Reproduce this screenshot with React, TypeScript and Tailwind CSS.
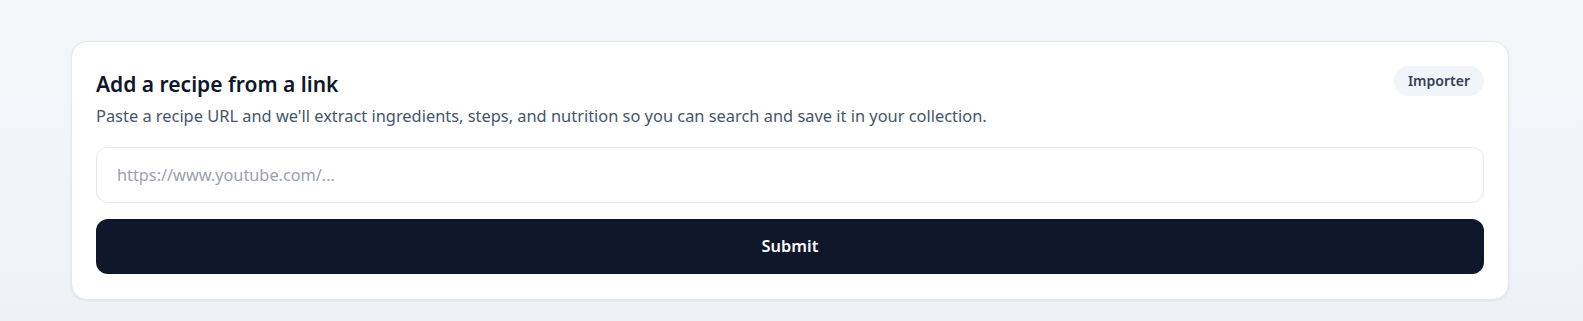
export default function App() {
  return (
    <div
      className="min-h-screen bg-gradient-to-b from-[#f5f7fa] to-[#eef2f7] pl-[71px] pr-[74px] pt-[41px] pb-6"
      style={{ fontFamily: '"Noto Sans", "Open Sans", sans-serif' }}
    >
      <section className="rounded-2xl border border-slate-200 bg-white px-6 pt-7 pb-[25px] shadow-[0_1px_3px_rgba(15,23,42,0.08)]">
        <div className="flex items-start justify-between gap-4">
          <div>
            <h2 className="text-[21px] font-semibold leading-7 text-slate-900">Add a recipe from a link</h2>
            <p className="mt-1.5 text-[16.4px] leading-6 text-slate-600">
              Paste a recipe URL and we'll extract ingredients, steps, and nutrition so you can search and save it in your collection.
            </p>
          </div>
          <span className="-mt-1 rounded-full bg-slate-100 px-[14px] py-[5px] text-sm font-semibold text-slate-700">Importer</span>
        </div>

        <form className="mt-[19px] flex flex-col gap-4" onSubmit={(e) => e.preventDefault()}>
          <input
            type="url"
            placeholder="https://www.youtube.com/..."
            className="h-14 w-full rounded-xl border border-slate-200 bg-white px-5 text-[16.3px] text-slate-900 placeholder:text-gray-400 outline-none"
          />
          <button
            type="submit"
            className="h-[55px] w-full rounded-xl bg-slate-900 text-[16.4px] font-semibold text-white"
          >
            Submit
          </button>
        </form>
      </section>
    </div>
  );
}
